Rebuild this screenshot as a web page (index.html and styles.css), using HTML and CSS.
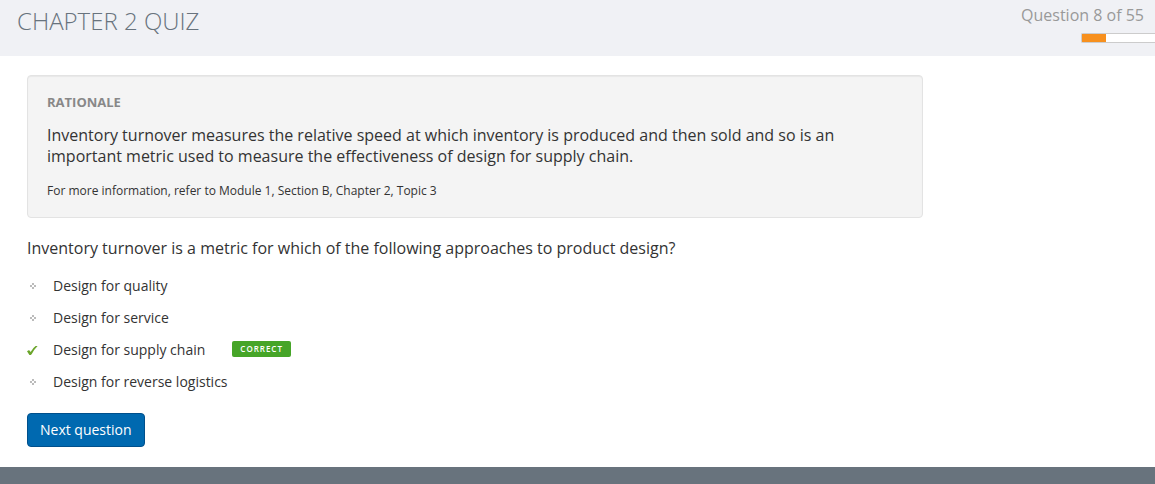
FILE: index.html
```html
<!DOCTYPE html>
<html lang="en">
<head>
<meta charset="utf-8">
<title>Chapter 2 Quiz</title>
<link rel="stylesheet" href="styles.css">
</head>
<body>
<header class="top">
  <h1 class="title">CHAPTER 2 QUIZ</h1>
  <div class="status">
    <p class="count">Question 8 of 55</p>
    <div class="progress"><div class="progress-fill"></div></div>
  </div>
</header>
<main class="content">
  <section class="rationale">
    <h2 class="rationale-title">RATIONALE</h2>
    <p class="rationale-text">Inventory turnover measures the relative speed at which inventory is produced and then sold and so is an important metric used to measure the effectiveness of design for supply chain.</p>
    <p class="rationale-more">For more information, refer to Module 1, Section B, Chapter 2, Topic 3</p>
  </section>
  <p class="question">Inventory turnover is a metric for which of the following approaches to product design?</p>
  <ul class="answers">
    <li class="answer"><svg class="mark" viewBox="0 0 12 12"><path class="dot" d="M5 4h2v2h-2zM3 6h2v2h-2zM7 6h2v2h-2zM5 8h2v2h-2z"/></svg>Design for quality</li>
    <li class="answer"><svg class="mark" viewBox="0 0 12 12"><path class="dot" d="M5 4h2v2h-2zM3 6h2v2h-2zM7 6h2v2h-2zM5 8h2v2h-2z"/></svg>Design for service</li>
    <li class="answer"><svg class="mark" viewBox="0 0 12 12"><path class="tick" d="M0 8.200L1.600 7.200 2.600 7.600 3.600 8.900Q6 4.800 8.600 3H10.600Q7 6.500 4.800 11L3.800 12H2.400z"/></svg>Design for supply chain<span class="badge">CORRECT</span></li>
    <li class="answer"><svg class="mark" viewBox="0 0 12 12"><path class="dot" d="M5 4h2v2h-2zM3 6h2v2h-2zM7 6h2v2h-2zM5 8h2v2h-2z"/></svg>Design for reverse logistics</li>
  </ul>
  <button class="next" type="button">Next question</button>
</main>
<footer class="foot"></footer>
</body>
</html>
```
FILE: styles.css
```css
* { box-sizing: border-box; }
body {
  margin: 0;
  min-height: 100vh;
  display: flex;
  flex-direction: column;
  background: #fff;
  color: #333;
  font-family: "Open Sans", sans-serif;
}
h1, h2, p, ul { margin: 0; padding: 0; }
.top {
  display: flex;
  justify-content: space-between;
  align-items: flex-start;
  padding: 4px 0 13px 17px;
  background: #f0f1f5;
}
.title { font-size: 24px; line-height: 34px; font-weight: 300; color: #68737d; }
.status { display: flex; flex-direction: column; align-items: flex-end; }
.count { padding-right: 11px; font-size: 16px; line-height: 22px; color: #999; }
.progress { width: 74px; height: 10px; margin-top: 7px; border: 1px solid #ccc; border-right: 0; border-radius: 2px 0 0 2px; background: #fff; }
.progress-fill { width: 24px; height: 8px; background: #f7901e; }
.content { padding: 19px 27px 20px; }
.rationale {
  max-width: 896px;
  padding: 17px 19px 16px;
  border: 1px solid #e3e3e3;
  border-radius: 4px;
  background: #f4f4f4;
  box-shadow: inset 0 1px 1px rgba(0, 0, 0, 0.05);
}
.rationale-title { font-size: 13px; line-height: 18px; font-weight: 700; color: #888; }
.rationale-text { margin-top: 14px; max-width: 820px; font-size: 16px; line-height: 21px; }
.rationale-more { margin-top: 14px; font-size: 12px; line-height: 20px; }
.question { margin-top: 19px; font-size: 16px; line-height: 22px; }
.answers { margin-top: 10px; list-style: none; }
.answer { display: flex; align-items: center; height: 32px; font-size: 14px; }
.mark { width: 12px; height: 12px; margin-right: 14px; }
.dot { fill: #bbb; }
.tick { fill: #6ba52b; }
.badge { margin-left: 27px; padding: 0 8px; border-radius: 2px; background: #46a528; color: #fff; font-size: 8px; line-height: 16px; font-weight: 600; letter-spacing: 1px; }
.next { height: 34px; margin-top: 16px; padding: 0 12px 2px; border: 1px solid #00508c; border-radius: 4px; background: #0069b0; color: #fff; font: 500 14px "Open Sans", sans-serif; }
.foot { flex: 1; min-height: 17px; background: #68737d; }
```
